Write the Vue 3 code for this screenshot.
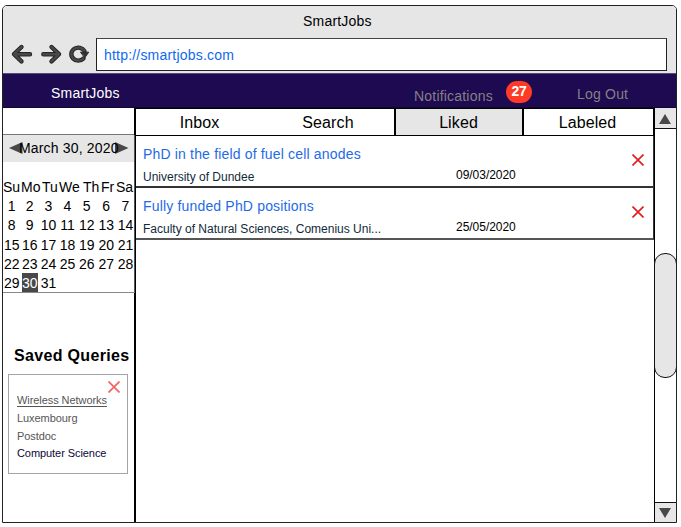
<script setup>
const weekdays = ['Su', 'Mo', 'Tu', 'We', 'Th', 'Fr', 'Sa']
const days = Array.from({ length: 31 }, (_, i) => i + 1)
const tabs = ['Inbox', 'Search', 'Liked', 'Labeled']
const jobs = [
  { title: 'PhD in the field of fuel cell anodes', place: 'University of Dundee', date: '09/03/2020' },
  { title: 'Fully funded PhD positions', place: 'Faculty of Natural Sciences, Comenius Uni...', date: '25/05/2020' },
]
</script>

<template>
  <div class="window">
    <header class="chrome">
      <div class="title">SmartJobs</div>
      <div class="tools">
        <svg class="icons" width="88" height="34" viewBox="0 0 88 34" fill="none" stroke-linecap="round" stroke-linejoin="round">
          <g stroke="#262626" stroke-width="4.4">
            <path d="M18.500 9L11 16.200l7.500 7.200M12 16.200H27" />
            <path d="M40.300 16.200H55M48.500 9l7.500 7.200-7.500 7.200" />
            <path d="M80.500 20.500A7 6.500 0 1 1 81.500 13" />
          </g>
          <g stroke="#484848" stroke-width="2.400">
            <path d="M18.500 9L11 16.200l7.500 7.200M12 16.200H27" />
            <path d="M40.300 16.200H55M48.500 9l7.500 7.200-7.500 7.200" />
            <path d="M80.500 20.500A7 6.500 0 1 1 81.500 13" />
          </g>
          <path d="M77.800 14.200H85.700L82 19.500Z" fill="#333" stroke="#262626" stroke-width="1" />
        </svg>
        <div class="address">http://smartjobs.com</div>
      </div>
    </header>
    <nav class="nav">
      <span class="brand">SmartJobs</span>
      <span class="notes">Notifications</span>
      <span class="badge">27</span>
      <span class="logout">Log Out</span>
    </nav>
    <div class="body">
      <aside class="side">
        <div class="spacer"></div>
        <section class="calendar">
          <div class="month">
            <svg width="14" height="12" viewBox="0 0 14 12"><path d="M0 6L13.500 0V12Z" fill="#484848" /></svg>
            <span>March 30, 2020</span>
            <svg width="14" height="12" viewBox="0 0 14 12"><path d="M13.500 6L0 0V12Z" fill="#484848" /></svg>
          </div>
          <div class="weekdays"><span v-for="w in weekdays" :key="w">{{ w }}</span></div>
          <div class="days">
            <span v-for="d in days" :key="d"><b :class="{ today: d === 30 }">{{ d }}</b></span>
          </div>
        </section>
        <h2>Saved Queries</h2>
        <section class="query">
          <svg class="remove" width="12" height="12" viewBox="0 0 12 12"><path d="M.5.5l11 11M11.500.5l-11 11" stroke="#f06464" stroke-width="1.700" /></svg>
          <a>Wireless Networks</a>
          <span>Luxembourg</span>
          <span>Postdoc</span>
          <strong>Computer Science</strong>
        </section>
      </aside>
      <main class="main">
        <div class="tabs">
          <div v-for="t in tabs" :key="t" :class="['tab', t.toLowerCase()]"><span>{{ t }}</span></div>
        </div>
        <article v-for="j in jobs" :key="j.title" class="job">
          <div class="info">
            <div class="job-title">{{ j.title }}</div>
            <div class="place">{{ j.place }}</div>
          </div>
          <div class="date">{{ j.date }}</div>
          <svg width="12" height="12" viewBox="0 0 12 12"><path d="M.5.5l11 11M11.500.5l-11 11" stroke="#e31b1b" stroke-width="1.600" /></svg>
        </article>
      </main>
      <div class="scroll">
        <div class="arrow up"><svg width="12" height="10" viewBox="0 0 12 10"><path d="M6 0L12 10H0Z" fill="#484848" /></svg></div>
        <div class="track"><div class="thumb"></div></div>
        <div class="arrow down"><svg width="12" height="10" viewBox="0 0 12 10"><path d="M6 10L12 0H0Z" fill="#484848" /></svg></div>
      </div>
    </div>
  </div>
</template>

<style>
body { background: #fff; }
</style>

<style scoped>
* { box-sizing: border-box; }
.window {
  width: 675px; height: 518px; margin: 5px 0 0 2px;
  border: 1px solid #222; border-radius: 5px 5px 0 0; overflow: hidden;
  display: flex; flex-direction: column;
  font: 14px/16px "Liberation Sans", Arial, sans-serif; color: #000; white-space: nowrap;
}
.chrome { height: 67px; background: #e6e6e6; flex: none; padding-top: 7px; }
.title { padding-left: 300px; letter-spacing: .2px; }
.tools { display: flex; margin-top: 9px; height: 33px; }
.icons { width: 88px; height: 34px; flex: none; }
.address {
  margin-left: 5px; width: 571px; height: 33px; border: 1px solid #222; border-top-color: #444; background: #fff;
  padding: 8px 7px; color: #0f69f0; letter-spacing: .2px;
}
.nav {
  height: 35px; flex: none; background: #1d0a50; border-top: 1px solid #584981; border-bottom: 1px solid #120630;
  display: flex; color: #858085; letter-spacing: .2px;
}
.brand { width: 411px; padding: 11px 0 0 48px; color: #fff; }
.notes { width: 92px; padding-top: 14px; }
.badge {
  width: 26px; height: 22px; margin-top: 7px; border-radius: 11px; background: #ff3b26; color: #fff;
  font-weight: bold; text-align: center; line-height: 20px; font-size: 14px; letter-spacing: -.2px;
}
.logout { padding: 12px 0 0 45px; }
.body { flex: 1; display: flex; min-height: 0; }
.side { width: 133px; border-right: 2px solid #000; flex: none; }
.spacer { height: 27px; border-bottom: 1px solid #777; }
.calendar { height: 158px; border-bottom: 1px solid #888; width: 132px; font-size: 14px; border-right: 1px solid #555; }
.month { height: 27px; background: #e6e6e6; display: flex; align-items: center; padding-left: 6px; }
.month span { margin: -1px -6px 0 -4px; width: 102px; letter-spacing: .17px; position: relative; }
.month svg { flex: none; margin-top: -1px; }
.weekdays { display: grid; grid-template-columns: 18px 21px 17px 24px 18px 15px 18px; margin-top: 17px; }
.days { display: grid; grid-template-columns: 17.500px 18.500px 19px 19px 19.500px 19.500px 19px; grid-auto-rows: 19.250px; margin-top: 1px; text-align: center; }
.days span { line-height: 20px; }
.days b { font-weight: normal; display: inline-block; height: 19px; margin: 0 -2px; }
.days b.today { background: #484848; color: #fff; }
h2 { font-size: 16px; line-height: 20px; margin: 53px 0 0 11px; letter-spacing: .33px; }
.query {
  position: relative; width: 120px; height: 100px; margin: 8px 0 0 5px; border: 1px solid #a5a5a5;
  padding: 17px 0 0 8px; display: flex; flex-direction: column; align-items: flex-start;
  font-size: 11px; line-height: 17.800px; letter-spacing: -.07px; color: #555;
}
.remove { position: absolute; right: 7px; top: 6px; }
.query a { text-decoration: underline; text-underline-offset: 2px; }
.query strong { font-weight: normal; color: #0c0638; }
.main { width: 518px; flex: none; }
.tabs { height: 28px; display: flex; border: 1px solid #000; border-width: 1px 1px 1px 0; font-size: 16px; }
.tab { text-align: center; line-height: 27px; letter-spacing: .1px; }
.inbox { width: 127px; }
.search { width: 131px; }
.liked { width: 130px; background: #e6e6e6; border: solid #000; border-width: 0 2px; }
.labeled { flex: 1; padding-right: 2px; }
.search { padding-right: 1px; }
.liked { padding-right: 1px; }
.job { height: 52px; display: flex; padding: 10px 0 0 7px; border-bottom: 2px solid #333; border-right: 1px solid #333; }
.job:last-child { border-bottom-color: #555; }
.info { width: 313px; }
.job-title { color: #1f6be6; letter-spacing: .17px; height: 16px; }
.place { font-size: 12px; line-height: 14px; margin-top: 8px; color: #102a3a; }
.date { width: 176px; font-size: 12px; line-height: 14px; padding-top: 22px; letter-spacing: -.03px; }
.job svg { margin-top: 8px; }
.scroll { width: 22px; flex: none; display: flex; flex-direction: column; border-left: 1px solid #000; background: #fff; }
.arrow { height: 21px; background: #e6e6e6; display: flex; align-items: center; justify-content: center; padding-right: 1px; border: 0 solid #111; }
.up { border-bottom-width: 1px; padding-top: 1px; }
.down { border-top-width: 1px; height: 20px; }
.track { flex: 1; padding-top: 124px; }
.thumb { height: 125px; width: 23px; margin-left: -1px; border: 1px solid #111; border-radius: 11px; background: #e6e6e6; }
</style>
